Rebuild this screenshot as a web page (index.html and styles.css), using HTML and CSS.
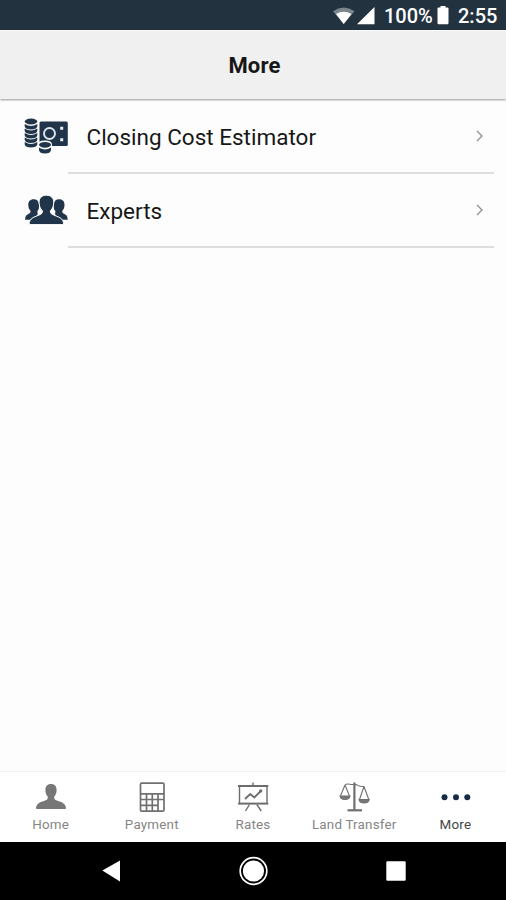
FILE: index.html
```html
<!DOCTYPE html>
<html lang="en">
<head>
<meta charset="utf-8">
<title>More</title>
<link rel="stylesheet" href="styles.css">
</head>
<body>
<div class="status">
  <svg class="signal" width="44" height="20" viewBox="332 5 44 20">
    <path fill="#7b858c" d="M333 11.2Q343.700 4 354.500 11.200L343.700 24Z"/>
    <path fill="#fff" d="M336 14Q343.700 9.500 351.500 14L343.700 24Z"/>
    <path fill="#fff" d="M374.500 7V24.300H357Z"/>
  </svg>
  <span class="percent">100%</span>
  <svg class="battery" width="12" height="20" viewBox="0 0 12 20"><path fill="#fff" d="M3.500 1h5v1.500H10.500q1 0 1 1V18q0 1.200-1 1.200H1.500q-1 0-1-1.200V3.500q0-1 1-1h2z"/></svg>
  <span class="time">2:55</span>
</div>
<header class="header"><h1>More</h1></header>
<main class="list">
  <a class="row">
    <svg class="row-icon" width="44" height="38" viewBox="24 117 44 38">
      <rect x="39.500" y="121.500" width="28.300" height="24.500" rx="1.500" fill="#20344a"/>
      <circle cx="49.500" cy="133.500" r="5.500" fill="none" stroke="#dfe7eb" stroke-width="1.900"/>
      <path fill="#e8eef1" d="M60.200 126.700h3v3h-3zM60.200 138.200h3v3h-3z"/>
      <g fill="#20344a">
        <ellipse cx="31" cy="121.500" rx="6.300" ry="2.900"/>
        <path id="coin" d="M24.700 124Q31 128.200 37.300 124V126.500Q36.500 129.500 31 129.500T24.700 126.500Z"/>
        <use href="#coin" y="4.500"/><use href="#coin" y="9"/><use href="#coin" y="13.500"/><use href="#coin" y="18"/>
      </g>
      <path fill="#fdfdfd" d="M38 144.500Q38 140.500 45 140.500T52 144.500V155H38Z"/>
      <g fill="#20344a"><ellipse cx="45" cy="144.800" rx="6" ry="2.900"/><path d="M39 147.400Q45 151.500 51 147.400V150Q50.500 153.500 45 153.500T39 150Z"/></g>
    </svg>
    <span class="row-label">Closing Cost Estimator</span>
    <svg class="chevron" width="10" height="14" viewBox="0 0 10 14"><path d="M2 2l5 5-5 5"/></svg>
  </a>
  <a class="row">
    <svg class="row-icon" width="44" height="38" viewBox="24 191 44 38" fill="#20344a">
      <path id="side" d="M33.500 199.200c-3.400 0-5.200 2.200-5.200 5.600 0 2.500.7 4.600 2.100 5.900.4 1.700-.4 2.500-1.600 3.100-2.500 1.200-3.700 2.400-3.700 6h5.500c1-1.700 3.500-3 6.500-4.300.8-1 .6-2.500.2-4.200 1-1 1.700-2.500 1.700-4.500v-2.500c-.3-3.300-2-5.100-5.500-5.100z"/>
      <use href="#side" transform="matrix(-1 0 0 1 92.800 0)"/>
      <path stroke="#fdfdfd" stroke-width="1" d="M46.400 195.200c-4.800 0-7.300 2.900-7.300 7.100 0 3.700 1.200 6.500 3.200 8.400.5 2.200-.5 3-2.500 4-5 2.300-10.700 3-10.700 9.900h34.600c0-6.900-5.700-7.600-10.700-9.900-2-1-3-1.800-2.500-4 2-1.900 3.200-4.700 3.200-8.400 0-4.200-2.500-7.100-7.300-7.100z"/>
    </svg>
    <span class="row-label">Experts</span>
    <svg class="chevron" width="10" height="14" viewBox="0 0 10 14"><path d="M2 2l5 5-5 5"/></svg>
  </a>
</main>
<nav class="tabs">
  <a class="tab">
    <svg width="34" height="32" viewBox="34 781 34 32"><path fill="#777" d="M51 784c-3.800 0-5.600 2.500-5.600 6 0 2.900.8 5 2.300 6.500.5 2.200-.4 3-2 3.700-4.500 1.800-9.200 2.300-9.700 7.800q0 1 1 1h28q1 0 1-1c-.5-5.500-5.200-6-9.700-7.800-1.600-.7-2.500-1.500-2-3.700 1.500-1.500 2.300-3.600 2.300-6.500 0-3.500-1.800-6-5.600-6z"/></svg>
    <span>Home</span>
  </a>
  <a class="tab">
    <svg width="34" height="32" viewBox="135 781 34 32" fill="none" stroke="#707070" stroke-width="1.700"><rect x="140.500" y="783.200" width="23.500" height="28" rx="1.200"/><path d="M140.500 793.800h23.500M140.500 799.500h23.500M140.500 805.300h17.500M146.500 793.800v17.400M152.300 793.800v17.400M158 793.800v17.400"/></svg>
    <span>Payment</span>
  </a>
  <a class="tab">
    <svg width="34" height="32" viewBox="236 781 34 32" fill="none" stroke="#6d6d6d" stroke-width="1.400"><path d="M253 782.500v3M249.500 804.500l-4 6.500M256.800 804.500l4.500 6.500"/><rect x="239.500" y="786" width="27.500" height="17.500"/><path stroke-width="1.800" d="M238 786h30.300M238 803.700h30.300M245 799l5.300-5 4 3.500 6-6"/><circle cx="260.700" cy="791" r="1.700" fill="#6d6d6d" stroke="none"/></svg>
    <span>Rates</span>
  </a>
  <a class="tab">
    <svg width="34" height="32" viewBox="337 781 34 32" fill="none" stroke="#707070" stroke-width="1.100"><path stroke-width="2.200" d="M354.400 782.500v28"/><path stroke-width="2.200" d="M347.500 810.300h14.500"/><path d="M345 785.200c2-2.800 5 0 9.400-.8 3-.5 5 3.500 9.600 1.800M345 785l-4.500 11M345 785l4.500 11M364 786.500l-4.500 13M364 786.500l4.800 13"/><path fill="#777" d="M340 796h10q-.5 3.500-5 3.500t-5-3.500zM359 799.500h10.200q-.5 3.500-5.100 3.500t-5.100-3.500z"/></svg>
    <span>Land Transfer</span>
  </a>
  <a class="tab active">
    <svg width="34" height="32" viewBox="438 781 34 32" fill="#152c44"><circle cx="444.500" cy="797.300" r="3"/><circle cx="456" cy="797.300" r="3"/><circle cx="467.300" cy="797.300" r="3"/></svg>
    <span>More</span>
  </a>
</nav>
<div class="system">
  <svg width="20" height="24" viewBox="0 0 20 24"><path fill="#fff" d="M1.300 11.400L19 1.500v21z"/></svg>
  <svg width="30" height="30" viewBox="0 0 30 30"><circle cx="14.500" cy="15" r="13.300" fill="none" stroke="#fff" stroke-width="1.700"/><circle cx="14.500" cy="15" r="10.600" fill="#fff"/></svg>
  <svg width="20" height="20" viewBox="0 0 20 20"><rect x=".3" y=".3" width="19.400" height="19.400" rx="1.200" fill="#fff"/></svg>
</div>
</body>
</html>
```

FILE: styles.css
```css
* { box-sizing: border-box; }
body {
  margin: 0;
  height: 900px;
  display: flex;
  flex-direction: column;
  overflow: hidden;
  background: #fdfdfd;
  color: #171717;
  font-family: Roboto, "Liberation Sans", sans-serif;
}
svg { display: block; flex: none; }
.status {
  height: 30px;
  flex: none;
  display: flex;
  align-items: center;
  justify-content: flex-end;
  padding-right: 8px;
  background: #22323f;
  color: #fff;
  font-size: 20px;
  font-weight: 500;
  line-height: 30px;
}
.status span { padding-top: 2px; white-space: nowrap; }
.percent { width: 49px; margin-left: 8px; }
.battery { margin: 0 9px 0 4px; }
.time { width: 40px; }
.header {
  height: 69px;
  flex: none;
  display: flex;
  align-items: center;
  justify-content: center;
  padding-top: 2px;
  border-top: 1px solid #fafafa;
  background: #f0f0f0;
  box-shadow: 0 1px 2px rgba(0, 0, 0, .4);
}
h1 { margin: 0; padding-left: 3px; font-size: 22px; font-weight: 700; line-height: 28px; letter-spacing: .2px; }
.list { flex: 1; padding-top: 1px; }
.row {
  height: 74px;
  display: flex;
  align-items: center;
  padding: 0 21px 2px 24px;
  background: linear-gradient(#dedede, #dedede) 68px 100% / 426px 2px no-repeat;
}
.row-label { flex: 1; margin-left: 18.5px; font-size: 22.5px; line-height: 30px; padding-top: 1px; }
.chevron { fill: none; stroke: #929292; stroke-width: 1.4; }
.tabs {
  height: 71px;
  flex: none;
  display: grid;
  grid-template-columns: repeat(5, 1fr);
  border-top: 1px solid #f1f1f1;
  background: #fff;
}
.tab {
  display: flex;
  flex-direction: column;
  align-items: center;
  padding-top: 9px;
  color: #858585;
  font-size: 13.4px;
  line-height: 16px;
  letter-spacing: .2px;
  white-space: nowrap;
}
.tab span { margin-top: 4px; }
.tab.active { color: #454545; }
.system {
  height: 58px;
  flex: none;
  display: flex;
  align-items: center;
  justify-content: space-between;
  padding: 0 100px 0 101px;
  background: #000;
}
```
